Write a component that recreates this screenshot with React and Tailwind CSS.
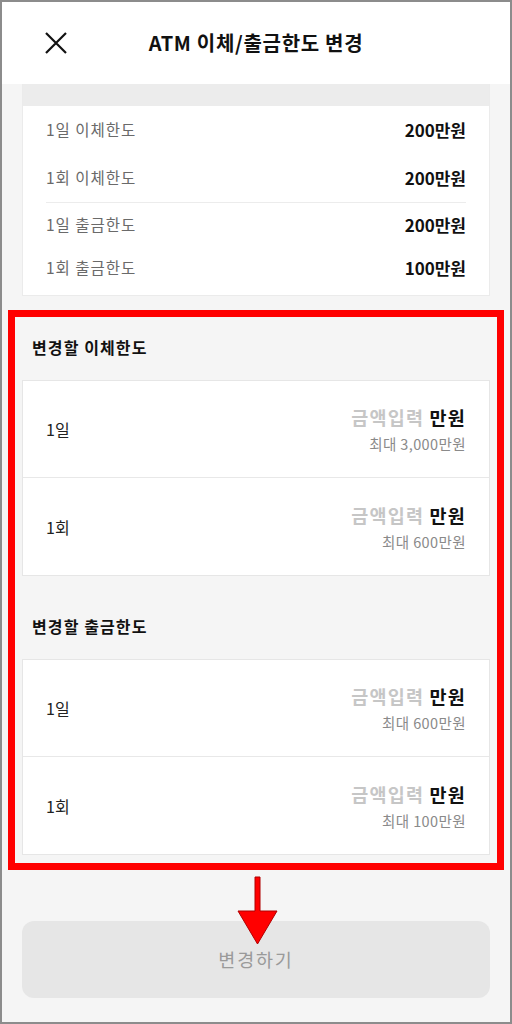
import React from "react";

const FONT = { fontFamily: '"Noto Sans CJK KR", "Noto Sans", sans-serif' };

function SummaryRow({ label, value, h }) {
  return (
    <div className={`flex items-center justify-between px-[23px] ${h}`}>
      <span className="text-[15.5px] tracking-[1px] text-[#6a6a6a]">{label}</span>
      <span className="text-[17px] font-bold text-[#111]">{value}</span>
    </div>
  );
}

function InputRow({ label, max, last }) {
  return (
    <div className={`flex h-[97px] items-center justify-between px-[23px] ${last ? "" : "border-b border-[#e8e8e8]"}`}>
      <span className="text-[16px] text-[#222]">{label}</span>
      <div className="flex flex-col items-end gap-[4px]">
        <div className="text-[18.5px] font-bold leading-[26px] tracking-[1.2px]">
          <span className="text-[#c6c6c6]">금액입력</span>{" "}
          <span className="text-[#111]">만원</span>
        </div>
        <div className="text-[14.5px] leading-[20px] tracking-[0.4px] text-[#8a8a8a]">최대 {max}</div>
      </div>
    </div>
  );
}

function Section({ title, rows, first }) {
  return (
    <div className={first ? "" : "mt-[20px]"}>
      <div className="pl-[10px] pt-[19px] pb-[21px] text-[16px] font-bold leading-[23px] tracking-[1.1px] text-[#111]">{title}</div>
      <div className="border border-[#e6e6e6] bg-white">
        {rows.map((r, i) => (
          <InputRow key={i} label={r[0]} max={r[1]} last={i === rows.length - 1} />
        ))}
      </div>
    </div>
  );
}

export default function App() {
  return (
    <div
      className="relative h-[1024px] w-[512px] overflow-hidden border-2 border-[#8c8c8c] bg-[#f5f5f5]"
      style={FONT}
    >
      <div className="grid h-[82px] grid-cols-[1fr_auto_1fr] items-center bg-white">
        <div className="pl-[43px]">
          <svg width="22" height="22" viewBox="0 0 22 22" fill="none">
            <path d="M1 1L21 21M21 1L1 21" stroke="#111" strokeWidth="2.2" />
          </svg>
        </div>
        <div className="text-[20px] font-bold tracking-[0.7px] text-[#111]">ATM 이체/출금한도 변경</div>
        <div />
      </div>

      <div className="px-[20px]">
        <div className="border-x border-b border-[#ebebeb] bg-white">
          <div className="h-[22px] bg-[#ececec]" />
          <SummaryRow label="1일 이체한도" value="200만원" h="h-[48px]" />
          <SummaryRow label="1회 이체한도" value="200만원" h="h-[48px]" />
          <div className="mx-[23px] h-px bg-[#ececec]" />
          <SummaryRow label="1일 출금한도" value="200만원" h="h-[43px]" />
          <SummaryRow label="1회 출금한도" value="100만원" h="h-[43px]" />
          <div className="h-[6px]" />
        </div>

        <div className="mx-[-14px] mt-[14px] border-[7px] border-[#ff0000] px-[7px] pb-[8px]">
          <Section
            first
            title="변경할 이체한도"
            rows={[
              ["1일", "3,000만원"],
              ["1회", "600만원"],
            ]}
          />
          <Section
            title="변경할 출금한도"
            rows={[
              ["1일", "600만원"],
              ["1회", "100만원"],
            ]}
          />
        </div>

        <div className="mt-[51px] flex h-[77px] items-center justify-center rounded-[12px] bg-[#e6e6e6] text-[18.5px] tracking-[1.8px] text-[#9a9a9a]">
          변경하기
        </div>
      </div>

      <svg
        className="absolute left-[228px] top-[873px]"
        width="56"
        height="72"
        viewBox="0 0 56 72"
      >
        <path
          d="M25 2 L30 2 L30 36 L47 36 L27.5 69 L8 36 L25 36 Z"
          fill="#ff0000"
          stroke="#b00000"
          strokeWidth="1"
        />
      </svg>
    </div>
  );
}
